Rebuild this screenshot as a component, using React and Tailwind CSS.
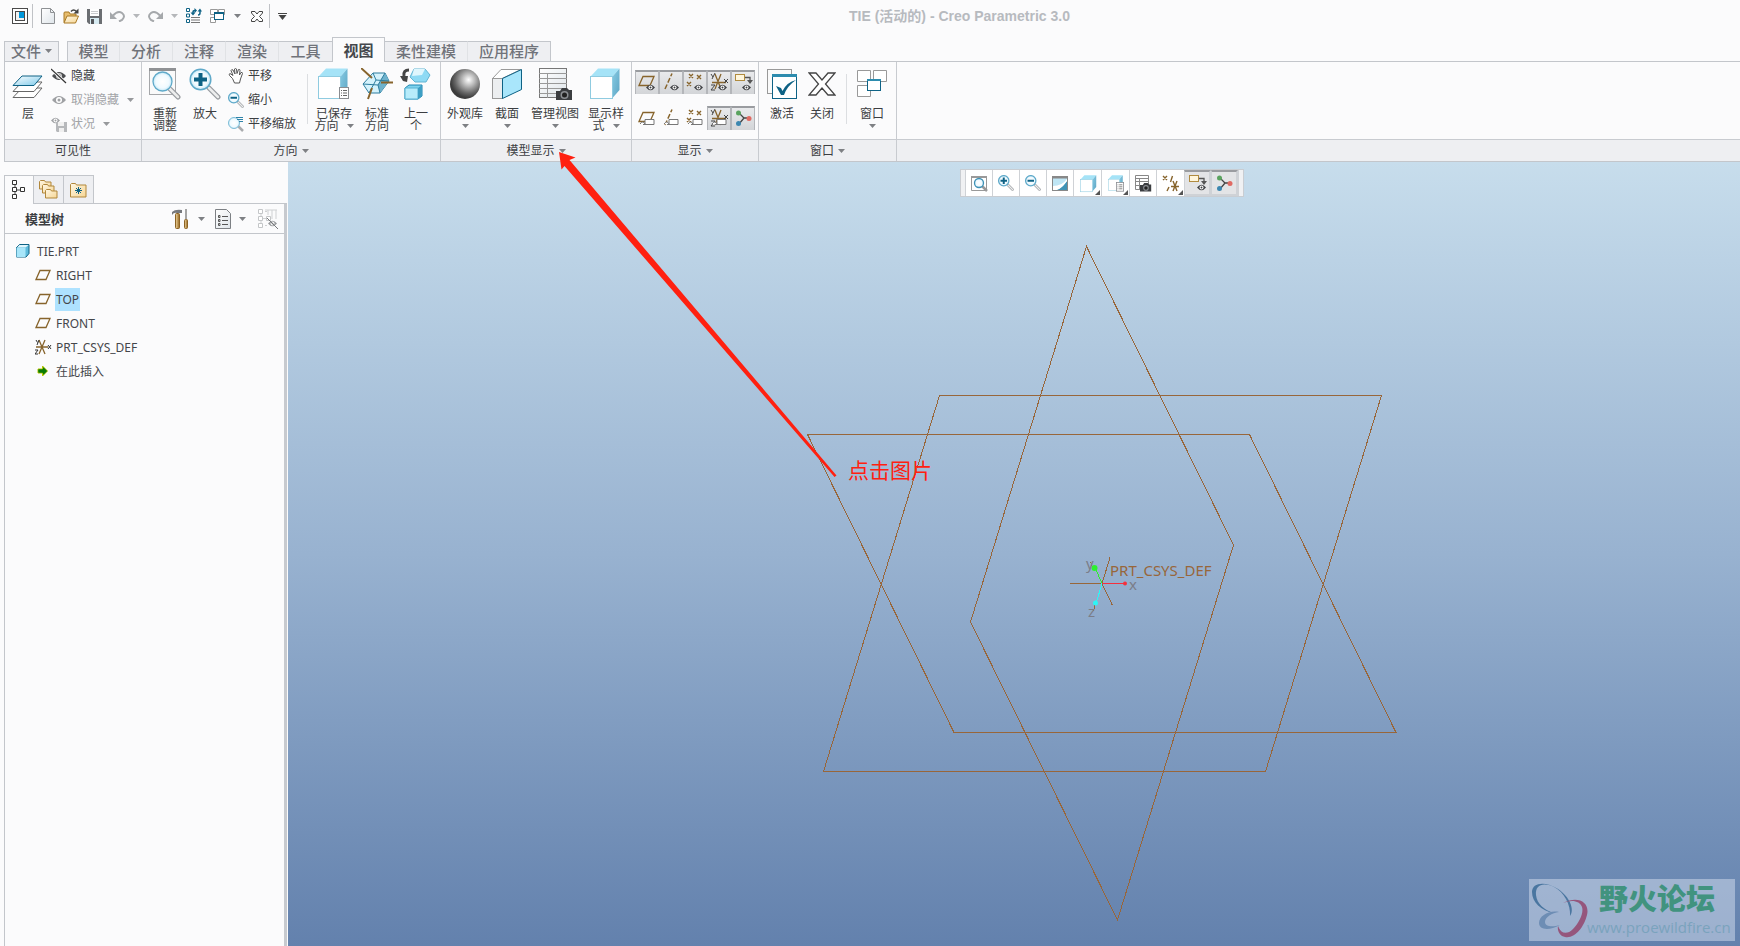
import React from "react";

const BLUE = "#0e6285";
const BROWN = "#87642c";
const GREY = "#8a8d91";

const Svg = ({ w = 16, h = w, children, className = "" }) => (
  <svg width={w} height={h} viewBox={`0 0 ${w} ${h}`} fill="none" className={`shrink-0 ${className}`} aria-hidden="true">
    {children}
  </svg>
);

const Gradients = () => (
  <svg width="0" height="0" className="absolute" aria-hidden="true">
    <defs>
      <linearGradient id="layer" x1="0" y1="0" x2="1" y2="1">
        <stop offset="0" stopColor="#fff" />
        <stop offset="1" stopColor="#7cc9ea" />
      </linearGradient>
      <linearGradient id="side" x1="0" y1="0" x2="1" y2="1">
        <stop offset="0" stopColor="#86cbe4" />
        <stop offset="1" stopColor="#5ea5c3" />
      </linearGradient>
      <linearGradient id="folder" x1="0" y1="0" x2="1" y2="1">
        <stop offset="0" stopColor="#fff7e4" />
        <stop offset="1" stopColor="#f5d695" />
      </linearGradient>
      <linearGradient id="wood" x1="0" y1="0" x2="1" y2="0">
        <stop offset="0" stopColor="#f2d8a0" />
        <stop offset="1" stopColor="#94651f" />
      </linearGradient>
      <linearGradient id="sheet" x1="0" y1="0" x2="1" y2="1">
        <stop offset="0" stopColor="#fff" />
        <stop offset="1" stopColor="#dfe5ea" />
      </linearGradient>
      <radialGradient id="ball" cx="0.62" cy="0.36" r="0.6">
        <stop offset="0" stopColor="#fff" />
        <stop offset="0.35" stopColor="#b9b9b9" />
        <stop offset="0.75" stopColor="#666" />
        <stop offset="1" stopColor="#3c3c3c" />
      </radialGradient>
      <radialGradient id="lens">
        <stop offset="0" stopColor="#fff" />
        <stop offset="0.7" stopColor="#f0faff" />
        <stop offset="1" stopColor="#bfe6f6" />
      </radialGradient>
    </defs>
  </svg>
);

const Caret = ({ className = "text-[#7e8084]" }) => (
  <Svg w={7} h={4} className={className}>
    <path d="M0 0h7L3.500 4z" fill="currentColor" />
  </Svg>
);

/* quick access icons */

const AppIcon = () => (
  <Svg w={16}>
    <rect x="0.5" y="0.5" width="15" height="15" fill="#fff" stroke="#4a4a4a" />
    <rect x="3" y="3" width="10" height="10" fill="#4a4a4a" />
    <rect x="4" y="4" width="3" height="8" fill="#f2f2f2" />
    <rect x="7" y="10" width="5" height="2" fill="#f2f2f2" />
    <rect x="7" y="4" width="5" height="6" fill="#0098dc" />
  </Svg>
);

const NewIcon = () => (
  <Svg w={14} h={16}>
    <path d="M0.500 0.500h9l4 4v11h-13z" fill="url(#sheet)" stroke="#8e9194" />
    <path d="M9.500 0.500v4h4" stroke="#8e9194" />
  </Svg>
);

const OpenIcon = () => (
  <Svg w={16}>
    <path d="M1 14.500V5q0-1 1-1h4l1 2h6v3" fill="#e7bd6e" stroke="#a87924" />
    <path d="M1 15l3-7h11.500l-3 7z" fill="url(#folder)" stroke="#a87924" />
    <path d="M8 3.500q2.500-3 5.500 0" stroke="#444" strokeWidth="1.500" />
    <path d="M15.500 0.500v5h-5z" fill="#444" />
  </Svg>
);

const SaveIcon = () => (
  <Svg w={15}>
    <path d="M0 0h15v15H2L0 13z" fill="#6b6e72" />
    <rect x="3" y="0" width="9" height="7" fill="#fff" />
    <path d="M4 2.500h7M4 4.500h7" stroke="#c9cbce" />
    <rect x="3" y="9" width="9" height="6" fill="#d7ebf2" />
    <rect x="4" y="10" width="3" height="5" fill="#54575b" />
  </Svg>
);

const UndoIcon = ({ flip = false }) => (
  <Svg w={15} h={12} className={flip ? "-scale-x-100" : ""}>
    <path d="M3 5.500Q8 0 12 3t0 7l-3 1.500" stroke="#a5a8ab" strokeWidth="2" />
    <path d="M0 2v7h7z" fill="#a5a8ab" />
  </Svg>
);

const RegenIcon = () => (
  <Svg w={16} h={16}>
    <path d="M0.500 0.500h3v3h-3zM0.500 6h3v3h-3zM0.500 11.500h3v3h-3z" stroke={BLUE} fill="#fff" />
    <path d="M5 9.500h9M5 12h9M5 14.500h9" stroke="#777" />
    <path d="M7 5.500V4q0-1.500 2-1.500" stroke={BLUE} strokeWidth="1.500" />
    <path d="M4.500 4.500h5L7 7.500zM8.500 0l2.500 2.500L8.500 5z" fill={BLUE} />
    <path d="M14 3v2q0 2-2 2" stroke={BLUE} strokeWidth="1.500" />
    <path d="M11.500 3.500L14 0.500l2 3z" fill={BLUE} />
  </Svg>
);

const WindowsSmallIcon = () => (
  <Svg w={16}>
    <path d="M0.500 1.500h7v5h-7zM8.500 1.500h6v5h-6zM0.500 9.500h5v5h-5z" fill="#fff" stroke="#999" />
    <rect x="4.500" y="4.500" width="9" height="7" fill="#fff" stroke={BLUE} />
    <path d="M4 5h10" stroke={BLUE} strokeWidth="2" />
  </Svg>
);

const CloseSmallIcon = () => (
  <Svg w={12} h={11}>
    <path
      d="M0.500 0.500h3.500l2 2.500 2-2.500h3.500v1.500L8.500 5.500l3 3v2H8L6 8l-2 2.500H0.500v-2l3-3-3-3.500z"
      fill="#fff"
      stroke="#444"
    />
  </Svg>
);

/* ribbon icons */

const CloseIcon = () => (
  <Svg w={28} h={24}>
    <path d="M1 1h7l6 7 6-7h7l-9.500 11L27 23h-7l-6-7-6 7H1l9.500-11z" fill="#fff" stroke="#444" strokeWidth="1.300" />
  </Svg>
);

const LayersIcon = () => (
  <Svg w={32} h={32}>
    <path d="M1 29.500L10 20h20l-8 9.500z" fill="#fff" stroke="#666" />
    <path d="M1 23.500L10 14h20l-8 9.500z" fill="#fff" stroke="#666" />
    <path d="M1 17.500L10 8h20l-8 9.500z" fill="url(#layer)" stroke={BLUE} />
  </Svg>
);

const Eye = ({ color = "#4b4d50", x = 0, y = 0 }) => (
  <g transform={`translate(${x} ${y})`}>
    <path d="M0 4.500Q4.500-1 9 4.500 4.500 10 0 4.500z" fill={color} />
    <circle cx="4.500" cy="4.500" r="2" fill="#fff" />
    <circle cx="4.500" cy="4.500" r="1" fill={color} />
  </g>
);

const HideIcon = () => (
  <Svg w={16}>
    <path d="M1 8q7-8 14 0-7 8-14 0z" fill="#4b4d50" />
    <circle cx="8" cy="8" r="3" fill="#c9c9c9" />
    <circle cx="8" cy="8" r="1.500" fill="#4b4d50" />
    <path d="M0 1l15 14" stroke="#fbfbfc" strokeWidth="3" />
    <path d="M0 1l15 14" stroke="#333" strokeWidth="1.200" />
  </Svg>
);

const UnhideIcon = () => (
  <Svg w={16}>
    <path d="M1 8q7-8 14 0-7 8-14 0z" fill="#9fa1a4" />
    <circle cx="8" cy="8" r="3" fill="#fff" />
    <circle cx="8" cy="8" r="1.500" fill="#9fa1a4" />
  </Svg>
);

const StatusIcon = () => (
  <Svg w={16}>
    <Eye color="#9fa1a4" />
    <path d="M5 6h11v10H6l-1-1z" fill="#b6b8bb" />
    <rect x="7" y="6" width="6" height="4" fill="#f0f0f0" />
    <rect x="8" y="12" width="5" height="4" fill="#f0f0f0" />
  </Svg>
);

const Lens = ({ s = 16, sign }) => (
  <svg width={s} height={s} viewBox="0 0 32 32" fill="none" aria-hidden="true" className="shrink-0">
    <path d="M20 20l9 9" stroke="#999ca0" strokeWidth="5" strokeLinecap="round" />
    <path d="M20 20l9 9" stroke="#eceded" strokeWidth="2.500" strokeLinecap="round" />
    <circle cx="11.500" cy="11.500" r="10.300" fill="url(#lens)" stroke="#5fa9c9" strokeWidth={s > 20 ? 1.5 : 2.5} />
    {sign && <path d="M5 11.500h13" stroke={BLUE} strokeWidth="4" />}
    {sign === "+" && <path d="M11.500 5v13" stroke={BLUE} strokeWidth="4" />}
  </svg>
);

const RefitIcon = () => (
  <Svg w={32}>
    <rect x="0.500" y="0.500" width="26" height="26" fill="#fafafa" stroke="#a5a7aa" />
    <path d="M0 1.500h27" stroke="#8f9194" strokeWidth="3" />
    <path d="M20 20l9 9" stroke="#999ca0" strokeWidth="5" strokeLinecap="round" />
    <path d="M20 20l9 9" stroke="#eceded" strokeWidth="2.500" strokeLinecap="round" />
    <circle cx="13.500" cy="13.500" r="9.500" fill="url(#lens)" stroke="#5fa9c9" strokeWidth="1.300" />
  </Svg>
);

const PanZoomIcon = () => (
  <Svg w={16}>
    <path d="M10 10l5 5" stroke="#a9abae" strokeWidth="2.500" />
    <circle cx="6" cy="7" r="5.500" fill="url(#lens)" stroke="#7dbcd6" />
    <path d="M8 1.500h7M9 3.500h6M11 5.500h4" stroke="#2f83a8" />
  </Svg>
);

const HandIcon = () => (
  <Svg w={16}>
    <path
      d="M4.500 10.500L1.500 7.500q-1-1.500 0.500-2l3 2-2-5q0.500-1.500 2-0.500L7 6l-0.500-5q1-1 2 0L9 5.500l1.500-4q1.500-0.500 1.500 1L11.500 7 13 4.500q1.500-0.500 1.500 1L12.500 11l-1 4h-5z"
      fill="#fff"
      stroke="#555"
    />
  </Svg>
);

const CubeShape = () => (
  <>
    <path d="M0.500 8.500L8 0.500h21.500l-7 8z" fill="#a5e3f7" />
    <path d="M22.500 8.500l7-8V22l-7 8z" fill="url(#side)" />
    <rect x="0.500" y="8.500" width="22" height="22" fill="#fff" stroke="#8fcbe0" />
  </>
);

const Note = ({ x, y }) => (
  <g transform={`translate(${x} ${y})`}>
    <rect x="0.500" y="0.500" width="9" height="11" fill="#fff" stroke={GREY} />
    <path d="M2 3.500h1M4 3.500h4M2 6h1M4 6h4M2 8.500h1M4 8.500h4" stroke="#666" />
  </g>
);

const SavedViewIcon = () => (
  <Svg w={32}>
    <CubeShape />
    <Note x={21} y={19} />
  </Svg>
);

const CubeIcon = () => (
  <Svg w={32}>
    <CubeShape />
  </Svg>
);

const StdViewIcon = () => (
  <Svg w={32}>
    <path d="M2 16L12 5h12l4 8-9 12H8z" fill="#d4f2fc" stroke="#2d7d9e" />
    <path d="M17 17l7-12 4 8-9 12z" fill="#6db2cd" />
    <path d="M2 16l15 1 7-12M17 17l2 8M8 25l7-13 13 1M12 5l3 7" stroke="#2d7d9e" />
    <path d="M0 0l11 10M20 14.500h12M11 20L7 31" stroke={BROWN} strokeWidth="2" />
  </Svg>
);

const PrevViewIcon = () => (
  <Svg w={32}>
    <path d="M9 2Q3 2 4 8" stroke="#444" strokeWidth="3" />
    <path d="M0 8h8l-1 6-4-1z" fill="#444" />
    <path d="M14 1h11l5 6-4 7H15l-5-5z" fill="#8edaf4" stroke="#63b4d2" />
    <path d="M14 1h11l-3 6-10 1z" fill="#dff6fd" />
    <path d="M5 20l4-3h13v11l-4 3H5z" fill="#7ed3ee" stroke="#1d86b1" />
    <path d="M5 20h13v11H5z" fill="#b7ecfb" stroke="#58b2d3" />
    <path d="M18 20l4-3v11l-4 3z" fill="#3d9fc4" />
  </Svg>
);

const BallIcon = () => (
  <Svg w={32}>
    <circle cx="16" cy="16" r="15" fill="url(#ball)" />
  </Svg>
);

const SectionIcon = () => (
  <Svg w={32}>
    <path d="M1.500 10.500L10 1.500h20L11 10.500z" fill="#fff" stroke="#999" />
    <rect x="1.500" y="10.500" width="10" height="20" fill="#eceef0" stroke="#999" />
    <path d="M11.500 10.500l19-9v20l-19 9z" fill="#a9e6fb" stroke={BLUE} />
  </Svg>
);

const Camera = ({ x, y, s = 1 }) => (
  <g transform={`translate(${x} ${y}) scale(${s})`}>
    <path d="M0 3h4l2-3h5l2 2h3v10H0z" fill="#3b3d40" />
    <circle cx="8.500" cy="7" r="4" fill="#8c8f93" />
    <circle cx="8.500" cy="7" r="2.500" fill="#222" />
  </g>
);

const ManageIcon = () => (
  <Svg w={34} h={32}>
    <rect x="1.500" y="0.500" width="27" height="29" fill="url(#sheet)" stroke="#777" />
    <path d="M1 5.500h28M1 10.500h28M1 15.500h28M1 20.500h28M1 25.500h28" stroke="#999" />
    <path d="M9.500 5v25" stroke="#999" />
    <Camera x={18} y={20} />
  </Svg>
);

const ActivateIcon = () => (
  <Svg w={30}>
    <rect x="0.500" y="0.500" width="24" height="24" fill="#fafafa" stroke="#999" />
    <rect x="5.500" y="5.500" width="24" height="24" fill="#fff" stroke={BLUE} />
    <path d="M5 6.500h25" stroke="#2d8cae" strokeWidth="3" />
    <path d="M9 17l5 2 1.500 3Q20 13 29 11q-9 6-12 15h-3z" fill={BLUE} />
  </Svg>
);

const WindowsIcon = () => (
  <Svg w={32}>
    <path d="M1.500 2.500h13v11h-13zM17.500 2.500h13v11h-13zM1.500 17.500h13v11h-13z" fill="#fff" stroke="#999" />
    <rect x="11.500" y="11.500" width="13" height="11" fill="#fff" stroke={BLUE} />
    <path d="M11 12h14" stroke="#2d8cae" strokeWidth="2" />
  </Svg>
);

/* datum toggles, 24px tiles */

const Plane = () => <path d="M4 15.500L8 6.500h11l-4 9z" fill="none" stroke={BROWN} strokeWidth="1.300" />;
const Axis = () => <path d="M6 19L13 3.500" stroke={BROWN} strokeWidth="1.500" strokeDasharray="5 2" />;
const Points = () => (
  <path d="M6 4l4 4m0-4l-4 4M14 5l4 4m0-4l-4 4M4 12l4 4m0-4l-4 4" stroke={BROWN} strokeWidth="1.400" />
);
const CsysMark = () => (
  <>
    <path d="M5 12.500h14M8 4l6 15M14 4L8 19" stroke={BROWN} strokeWidth="1.300" />
    <path d="M4 4l2 3M8 3L5 9M4 15h4l-4 5h4M17 9l4 4m0-4l-4 4" stroke="#444" />
  </>
);
const Tag = () => <path d="M5 18q3-4 5 0V13.500h9v5H8" fill="#fff" stroke="#777" />;
const Callout = () => (
  <>
    <rect x="4.500" y="4.500" width="9" height="6" fill="#fff6dc" stroke="#b08b3f" />
    <path d="M14 7.500h5v4" stroke="#555" strokeWidth="1.300" />
    <path d="M16 10h6l-3 4z" fill="#555" />
  </>
);
const Spin = () => (
  <>
    <path d="M8 7l5 5-5 6M13 12h5" stroke="#444" strokeWidth="1.300" />
    <circle cx="7.500" cy="7" r="2.500" fill="#5aa35f" />
    <circle cx="7.500" cy="17.500" r="2.500" fill="#3c87b0" />
    <circle cx="18" cy="12.500" r="2.500" fill="#e06a63" />
  </>
);
const TileEye = () => <Eye x={11} y={13} color="#3f4144" />;

const displayTiles = [
  [
    { name: "平面显示", on: true, art: <><Plane /><TileEye /></> },
    { name: "轴显示", on: true, art: <><Axis /><TileEye /></> },
    { name: "点显示", on: true, art: <><Points /><TileEye /></> },
    { name: "坐标系显示", on: true, art: <><CsysMark /><TileEye /></> },
    { name: "注释显示", on: true, art: <><Callout /><TileEye /></> },
  ],
  [
    { name: "平面标记显示", art: <><Plane /><Tag /></> },
    { name: "轴标记显示", art: <><Axis /><Tag /></> },
    { name: "点标记显示", art: <><Points /><Tag /></> },
    { name: "坐标系标记显示", on: true, art: <><CsysMark /><Tag /></> },
    { name: "旋转中心", on: true, art: <Spin /> },
  ],
];

const Tile = ({ tile }) => (
  <button
    type="button"
    aria-label={tile.name}
    aria-pressed={!!tile.on}
    className={`size-6 ${
      tile.on
        ? "border-x border-t-2 border-[#b4b6ba] border-t-[#9a9ca0] bg-linear-to-b from-[#e9eaec] to-[#d3d5d8] *:-mt-0.5 *:-ml-px"
        : ""
    }`}
  >
    <Svg w={24}>{tile.art}</Svg>
  </button>
);

/* ribbon parts */

const BigButton = ({ icon, lines, caret, width }) => {
  const last = lines.length - 1;
  return (
    <button type="button" className={`flex flex-col items-center ${width}`}>
      <span className="mb-2 flex h-8 items-center">{icon}</span>
      {lines.map((line, i) => (
        <span key={line} className="flex items-center gap-2 leading-3">
          {line}
          {caret && i === last && last > 0 && <Caret />}
        </span>
      ))}
      {caret && last === 0 && (
        <span className="flex h-3 items-center">
          <Caret />
        </span>
      )}
    </button>
  );
};

const SmallButton = ({ icon, label, caret, disabled }) => (
  <button
    type="button"
    disabled={disabled}
    className={`flex h-6 items-center gap-1 ${disabled ? "text-[#a2a4a7]" : ""}`}
  >
    {icon}
    <span className="leading-4">{label}</span>
    {caret && <Caret className="ml-1 text-[#97999c]" />}
  </button>
);

const Group = ({ title, caret, width, children }) => (
  <section className={`flex shrink-0 flex-col border-r border-[#c8cbd0] ${width}`}>
    <div className="flex h-[77px] items-start">{children}</div>
    <h2 className="flex h-[22px] items-center justify-center gap-1 border-t border-[#c8cbd0] bg-[#eeeff2]">
      {title}
      {caret && <Caret />}
    </h2>
  </section>
);

const Divider = () => <span className="mt-3 h-[50px] w-px bg-[#dcdee1]" />;

const tabs = ["模型", "分析", "注释", "渲染", "工具", "视图", "柔性建模", "应用程序"];

const QuickAccess = () => (
  <header className="flex h-8 items-center pl-3">
    <button type="button" aria-label="Creo"><AppIcon /></button>
    <span className="mx-1 h-6 w-px bg-[#c0c2c6]" />
    <div className="flex items-center gap-2 pl-1">
      <button type="button" aria-label="新建"><NewIcon /></button>
      <button type="button" aria-label="打开"><OpenIcon /></button>
      <button type="button" aria-label="保存"><SaveIcon /></button>
      <button type="button" aria-label="撤消" className="flex items-center gap-2"><UndoIcon /><Caret className="text-[#b5b7ba]" /></button>
      <button type="button" aria-label="重做" className="flex items-center gap-2"><UndoIcon flip /><Caret className="text-[#b5b7ba]" /></button>
      <button type="button" aria-label="重新生成"><RegenIcon /></button>
      <button type="button" aria-label="窗口" className="mr-0.5 flex items-center gap-2"><WindowsSmallIcon /><Caret /></button>
      <button type="button" aria-label="关闭"><CloseSmallIcon /></button>
    </div>
    <span className="mr-2 ml-1.5 h-6 w-px bg-[#c0c2c6]" />
    <button type="button" aria-label="自定义">
      <Svg w={9} h={7}>
        <path d="M0 0.500h9" stroke="#444" />
        <path d="M0.500 2h8L4.500 7z" fill="#444" />
      </Svg>
    </button>
    <h1 className="mr-[108px] flex-1 text-center font-['Liberation_Sans','Noto_Sans_CJK_SC',sans-serif] text-sm leading-4 font-bold text-[#b7babf]">
      TIE (活动的) - Creo Parametric 3.0
    </h1>
  </header>
);

const TabBar = () => (
  <nav className="flex h-[29px] items-end pl-1 text-[15px] leading-4 font-medium text-[#70737a]">
    <button type="button" className="flex h-5 w-[55px] items-center justify-center gap-1 border border-b-0 border-[#c3c6cb] bg-[#eeeff2] pb-px">
      文件
      <Caret />
    </button>
    <div className="ml-2 flex items-end">
      {tabs.map((tab, i) => (
        <button
          type="button"
          key={tab}
          className={
            tab === "视图"
              ? "relative -mb-px h-[25px] w-[53px] border border-b-0 border-[#c3c6cb] bg-[#fbfbfc] pb-px font-bold text-[#44474c]"
              : `h-5 border-t border-r border-[#c3c6cb] bg-[#eeeff2] pb-px ${i === 0 ? "border-l" : ""} ${
                  i < 4 || i === 6 ? "border-r-[#e0e2e5]" : ""
                } ${i === 4 ? "border-r-0" : ""} ${tab.length > 2 ? "w-[83px]" : "w-[53px]"}`
          }
        >
          {tab}
        </button>
      ))}
    </div>
  </nav>
);

const Ribbon = () => (
  <div className="ml-1 flex border-y border-l border-[#c3c6cb] text-xs text-[#3c3e42]">
    <Group title="可见性" width="w-[137px]">
      <div className="flex pt-1.5">
        <BigButton width="w-[46px]" icon={<LayersIcon />} lines={["层"]} />
      </div>
      <div className="flex flex-col items-start pt-0.5">
        <SmallButton icon={<HideIcon />} label="隐藏" />
        <SmallButton icon={<UnhideIcon />} label="取消隐藏" caret disabled />
        <SmallButton icon={<StatusIcon />} label="状况" caret disabled />
      </div>
    </Group>

    <Group title="方向" caret width="w-[299px]">
      <div className="flex pt-1.5 pl-[3px]">
        <BigButton width="w-10" icon={<RefitIcon />} lines={["重新", "调整"]} />
        <BigButton width="w-10" icon={<Lens s={32} sign="+" />} lines={["放大"]} />
      </div>
      <div className="flex w-[82px] flex-col items-start pt-0.5 pl-[3px]">
        <SmallButton icon={<HandIcon />} label="平移" />
        <SmallButton icon={<Lens sign="-" />} label="缩小" />
        <SmallButton icon={<PanZoomIcon />} label="平移缩放" />
      </div>
      <Divider />
      <div className="flex pt-1.5 pl-1">
        <BigButton width="w-11" icon={<SavedViewIcon />} lines={["已保存", "方向"]} caret />
        <BigButton width="w-[42px]" icon={<StdViewIcon />} lines={["标准", "方向"]} />
        <BigButton width="w-9" icon={<PrevViewIcon />} lines={["上一", "个"]} />
      </div>
    </Group>

    <Group title="模型显示" caret width="w-[191px]">
      <div className="flex pt-1.5 pl-[3px]">
        <BigButton width="w-[42px]" icon={<BallIcon />} lines={["外观库"]} caret />
        <BigButton width="w-[42px]" icon={<SectionIcon />} lines={["截面"]} caret />
        <BigButton width="w-[54px]" icon={<ManageIcon />} lines={["管理视图"]} caret />
        <BigButton width="w-12" icon={<CubeIcon />} lines={["显示样", "式"]} caret />
      </div>
    </Group>

    <Group title="显示" caret width="w-[127px]">
      <div className="flex flex-col gap-3 pt-2 pl-[3px]">
        {displayTiles.map((row, i) => (
          <div key={i} className="flex">
            {row.map((tile) => (
              <Tile key={tile.name} tile={tile} />
            ))}
          </div>
        ))}
      </div>
    </Group>

    <Group title="窗口" caret width="w-[138px]">
      <div className="flex pt-1.5 pl-[3px]">
        <BigButton width="w-10" icon={<ActivateIcon />} lines={["激活"]} />
        <BigButton width="w-10" icon={<CloseIcon />} lines={["关闭"]} />
      </div>
      <div className="flex pl-1">
        <Divider />
      </div>
      <div className="flex pt-1.5 pl-1">
        <BigButton width="w-[42px]" icon={<WindowsIcon />} lines={["窗口"]} caret />
      </div>
    </Group>

    <div className="flex flex-1 flex-col">
      <div className="h-[77px]" />
      <div className="h-[22px] border-t border-[#c8cbd0] bg-[#eeeff2]" />
    </div>
  </div>
);

/* model tree */

const TreeTabIcon = () => (
  <Svg w={14} h={20}>
    <path d="M3 5v10M3 10h6" stroke="#444" />
    <path d="M0.500 0.500h4v4h-4zM0.500 7.500h4v4h-4zM0.500 14.500h4v4h-4zM8.500 7.500h4v4h-4z" fill="#fff" stroke="#333" />
  </Svg>
);

const Folder = ({ x = 0, y = 0, w = 12, h = 9 }) => (
  <g transform={`translate(${x} ${y})`}>
    <path d={`M0.500 ${h}V1.500l1-1h4l1 1.500H${w}V${h}z`} fill="url(#folder)" stroke="#b1873b" />
  </g>
);

const FoldersIcon = () => (
  <Svg w={19}>
    <Folder x={0} y={0} />
    <Folder x={3} y={4} />
    <Folder x={6} y={9} />
  </Svg>
);

const FavIcon = () => (
  <Svg w={17} h={18}>
    <Folder x={0} y={2} w={16} h={14} />
    <path d="M8.500 6v7M5 9.500h7M6 7l5 5M11 7l-5 5" stroke={BLUE} />
  </Svg>
);

const ToolsIcon = () => (
  <Svg w={18} h={20}>
    <path d="M0 3q3-3 10-2v3H5Q2 3 0 6z" fill="#77797d" />
    <rect x="3.500" y="4.500" width="4" height="15" rx="1" fill="url(#wood)" stroke="#8c6325" />
    <path d="M14 0v10" stroke="#888" strokeWidth="1.500" />
    <rect x="12.500" y="10.500" width="3" height="9" rx="1" fill="url(#wood)" stroke="#8c6325" />
  </Svg>
);

const ListIcon = () => (
  <Svg w={16} h={20}>
    <path d="M0.500 0.500h11l4 4v15h-15z" fill="url(#sheet)" stroke="#7d8084" />
    <path d="M7 7.500h6M7 11.500h6M7 15.500h6" stroke="#555" />
    <path d="M3.500 6.500h1.500v2H3.500zM3.500 10.500h1.500v2H3.500zM3.500 14.500h1.500v2H3.500z" stroke="#555" />
  </Svg>
);

const TreeHideIcon = () => (
  <Svg w={20}>
    <path d="M3 5v10M5 9.500h4M7 2.500h2M7 16.500h2M10 1v5M14 1v9M18 1v9M7 1h12" stroke="#cfd1d3" />
    <path d="M0.500 0.500h4v4h-4zM0.500 7.500h4v4h-4zM0.500 14.500h4v4h-4zM8.500 7.500h4v4h-4z" fill="#fff" stroke="#c4c6c8" />
    <Eye x={10} y={10} color="#96989b" />
    <path d="M9 9l11 11" stroke="#77797c" />
  </Svg>
);

const PartIcon = () => (
  <Svg w={14}>
    <path d="M0.500 3.500l3-3h9.500v9l-3 3.500H0.500z" fill="#5fbbdc" stroke={BLUE} />
    <path d="M0.500 4h9v9h-9z" fill="#a8e6fa" />
    <path d="M1 3.500l2.500-2.500h9L9.500 3.500z" fill="#dff6fd" />
  </Svg>
);

const PlaneIcon = () => (
  <Svg w={16} h={12}>
    <path d="M1 10.500l4-9h10l-4 9z" stroke={BROWN} strokeWidth="1.300" />
  </Svg>
);

const CsysIcon = () => (
  <Svg w={17} h={16}>
    <path d="M1 8h12M4 1l6 14M10 1L4 15" stroke={BROWN} strokeWidth="1.300" />
    <path d="M1 1l1.500 2.500M4 1L2 6M0 11h3l-3 4h3M13 6l3 4M16 6l-3 4" stroke="#333" />
  </Svg>
);

const InsertIcon = () => (
  <Svg w={12}>
    <path d="M1 4h4.500V1l5 5-5 5V8H1z" fill="#0a8a00" stroke="#b8c400" />
    <path d="M1.500 4.500h5V2.500L10 6 6.500 9.500V7.500h-5z" fill="#0a7a06" />
  </Svg>
);

const features = [
  { name: "RIGHT", icon: <PlaneIcon /> },
  { name: "TOP", icon: <PlaneIcon />, selected: true },
  { name: "FRONT", icon: <PlaneIcon /> },
  { name: "PRT_CSYS_DEF", icon: <CsysIcon /> },
  { name: "在此插入", icon: <InsertIcon /> },
];

const sideTab = "flex items-center justify-center border-t border-r border-[#c3c6cb]";

const ModelTree = () => (
  <aside className="flex w-72 shrink-0 flex-col pt-[13px] pr-px pl-1">
    <div className="flex h-[29px]">
      <button type="button" aria-label="模型树" className={`${sideTab} w-[30px] border-l`}><TreeTabIcon /></button>
      <button type="button" aria-label="文件夹浏览器" className={`${sideTab} w-[30px] border-b bg-[#eeeff2]`}><FoldersIcon /></button>
      <button type="button" aria-label="收藏夹" className={`${sideTab} w-[30px] border-b bg-[#eeeff2]`}><FavIcon /></button>
      <span className="flex-1 border-b border-[#c3c6cb]" />
    </div>
    <div className="flex-1 border-r-3 border-l border-r-[#c7cacf] border-l-[#c3c6cb]">
      <div className="flex h-[30px] items-center border-b border-[#c3c6cb] pr-1.5 pl-5">
        <h2 className="flex-1 text-[13px] leading-4 font-bold text-[#3c3e42]">模型树</h2>
        <button type="button" aria-label="设置" className="mr-2.5 flex items-center gap-2"><ToolsIcon /><Caret /></button>
        <button type="button" aria-label="显示" className="mr-3 flex items-center gap-2"><ListIcon /><Caret /></button>
        <button type="button" aria-label="树列"><TreeHideIcon /></button>
      </div>
      <ul className="pt-[5px] text-xs text-[#44464a]">
        <li className="flex h-6 items-center gap-1.5 pl-[11px]">
          <PartIcon />
          <span className="px-px leading-[23px]">TIE.PRT</span>
        </li>
        {features.map((f) => (
          <li key={f.name} className="flex h-6 items-center pl-[30px]">
            <span className="flex w-5 shrink-0 justify-center pr-1">{f.icon}</span>
            <span className={`px-px leading-[23px] ${f.selected ? "bg-[#aee2ff]" : ""}`}>{f.name}</span>
          </li>
        ))}
      </ul>
    </div>
  </aside>
);

/* graphics area */

const Corner = () => <path d="M24 19v5h-5z" fill="#555" />;

const viewTools = [
  {
    name: "重新调整",
    art: (
      <>
        <path d="M4.500 5.500h15v14h-15z" fill="#fff" stroke="#999" />
        <path d="M4 6h16" stroke="#999" strokeWidth="2" />
        <path d="M15 15l5 5" stroke="#999" strokeWidth="2.500" />
        <circle cx="12" cy="12" r="4.500" fill="url(#lens)" stroke="#3f91b5" strokeWidth="1.300" />
      </>
    ),
  },
  { name: "放大", lens: "+" },
  { name: "缩小", lens: "-" },
  {
    name: "重画",
    art: (
      <>
        <rect x="4.500" y="5.500" width="15" height="14" fill="#bfe6f5" stroke="#888" />
        <path d="M4 6.500h16" stroke="#888" strokeWidth="2" />
        <path d="M5 19l6-1q5-3 8-8v9z" fill="#3f93b6" />
        <path d="M5 15q9 0 14-7v2q-5 7-10 9H5z" fill="#fff" />
      </>
    ),
  },
  {
    name: "显示样式",
    flyout: true,
    art: (
      <>
        <g transform="translate(4 4) scale(0.55)"><CubeShape /></g>
        <Corner />
      </>
    ),
  },
  {
    name: "已保存方向",
    flyout: true,
    art: (
      <>
        <g transform="translate(4 4) scale(0.5)"><CubeShape /></g>
        <g transform="translate(12 11) scale(0.8)"><Note x={0} y={0} /></g>
        <Corner />
      </>
    ),
  },
  {
    name: "视图管理器",
    art: (
      <>
        <path d="M4.500 4.500h13v14h-13zM4.500 7.500h13M4.500 10.500h13M4.500 14.500h13M8.500 7.500v11" fill="#fff" stroke="#888" />
        <Camera x={9} y={12} s={0.7} />
      </>
    ),
  },
  {
    name: "基准显示过滤器",
    flyout: true,
    art: (
      <>
        <path d="M4 5l4 4m0-4L4 9M8 20l2-4M11.500 11l2-6M12 15.500h8M14 10l4 10M18 10l-4 10" stroke={BROWN} strokeWidth="1.400" />
        <Corner />
      </>
    ),
  },
  { name: "注释显示", on: true, art: <><Callout /><Eye x={12} y={12} color="#3f4144" /></> },
  { name: "旋转中心", on: true, art: <Spin /> },
];

const ViewToolbar = () => (
  <div className="absolute top-[7px] left-[672px] flex h-7 border border-[#c9cdd2] bg-[#f0f1f3] px-1">
    {viewTools.map((t) => (
      <button
        type="button"
        key={t.name}
        aria-label={t.name}
        className={`flex items-center justify-center border-l border-[#cfd2d6] ${t.flyout ? "w-7" : "w-[27px]"} ${
          t.on ? "border-2 border-[#b4b6ba] border-t-[#9a9ca0] bg-[#e3e4e6]" : "bg-white"
        }`}
      >
        {t.lens ? <Lens sign={t.lens} /> : <Svg w={24}>{t.art}</Svg>}
      </button>
    ))}
    <span className="border-l border-[#cfd2d6]" />
  </div>
);

const Scene = () => (
  <svg className="absolute inset-0 size-full" aria-label="TIE">
    <g fill="none" stroke="#98663a" shapeRendering="crispEdges">
      <path d="M651.500 233.500h442L977.500 609.500h-442z" />
      <path d="M519.500 272.500h442l146.500 298h-442z" />
      <path d="M798.500 84.500l147 298.500-116 375L682.500 460z" />
      <path d="M782 421.500h56M814 421.500l8-26M814 421.500l10.500 22M805.500 408l-3-8M807.500 441l-2 8" />
      <path d="M814 421.500h23" stroke="#f5303c" />
      <path d="M814 421.500l-7-16" stroke="#2df02d" />
      <path d="M814 421.500l-6 20" stroke="#2df5f5" />
    </g>
    <circle cx="837" cy="421.500" r="2" fill="#f5303c" />
    <circle cx="806.500" cy="406" r="3" fill="#2df02d" />
    <circle cx="807.500" cy="441" r="2.500" fill="#2df5f5" />
    <g fill="#7b7d88" fontSize="15">
      <text x="798" y="407">y</text>
      <text x="841" y="428">x</text>
      <text x="800" y="455">z</text>
    </g>
    <text x="822" y="414" fontSize="15" fill="#98663a">PRT_CSYS_DEF</text>
  </svg>
);

const Watermark = () => (
  <div className="absolute right-[5px] bottom-[5px] flex h-[62px] w-[206px] bg-[#d6dff0]/50">
    <svg width="60" height="62" viewBox="0 0 60 62" fill="none" className="shrink-0" aria-hidden="true">
      <path
        fillRule="evenodd"
        d="M3 13C3 3 17 2 29 10s17 21 12 27C42 26 35 13 25 8 14 3 6 6 7 16c1 9 8 15 18 18C12 32 3 23 3 13z"
        fill="#4a76a0"
      />
      <path d="M34 24c16-8 27 0 24 12S46 60 36 58c-5-1-8-6-7-11 3 8 9 9 15 3s11-16 9-22-10-8-19-4z" fill="#95567c" />
      <path d="M30 33c-10-2-20 4-20 11s10 8 21 2c-7 2-15 2-15-3s7-9 14-10z" fill="#6d8db4" />
    </svg>
    <div className="-ml-0.5 flex-1 pt-1 whitespace-nowrap">
      <p className="pl-3 text-[29px] leading-8 font-black text-[#41937f]">野火论坛</p>
      <p className="pt-0.5 font-['Open_Sans',sans-serif] text-[15px] leading-5 text-[#7aa3bd]">www.proewildfire.cn</p>
    </div>
  </div>
);

const Arrow = () => (
  <svg width="290" height="330" viewBox="0 0 290 330" className="pointer-events-none absolute top-[150px] left-[557px]" aria-hidden="true">
    <path d="M2 2l16.500 5.500-6 2.500L279.500 325.500 277.500 327 7.500 16l-3 3.500z" fill="#ff2010" />
  </svg>
);

export default function App() {
  return (
    <div className="relative flex min-h-screen flex-col bg-[#fbfbfc] font-['Noto_Sans','Noto_Sans_CJK_SC',sans-serif]">
      <Gradients />
      <QuickAccess />
      <TabBar />
      <Ribbon />
      <div className="flex flex-1">
        <ModelTree />
        <main className="relative flex-1 overflow-hidden bg-linear-to-b from-[#c7ddec] via-[#98b2d0] to-[#6381ad]">
          <Scene />
          <ViewToolbar />
          <p className="absolute top-[296px] left-[560px] text-[21px] leading-6 text-[#ff2010]">点击图片</p>
          <Watermark />
        </main>
      </div>
      <Arrow />
    </div>
  );
}
